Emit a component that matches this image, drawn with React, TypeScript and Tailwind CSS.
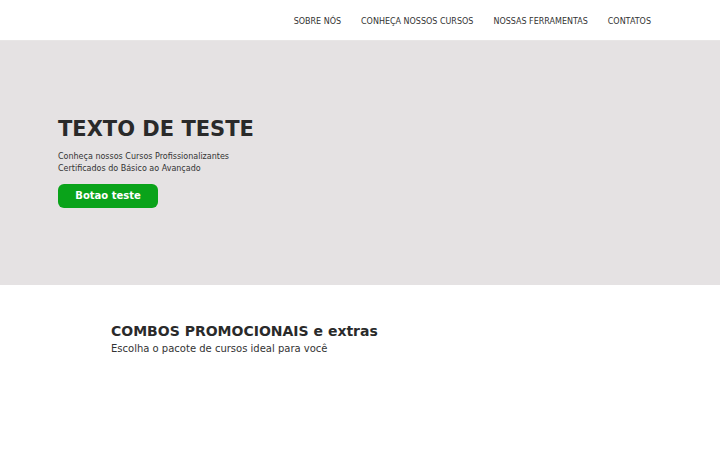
const navItems = ['SOBRE NÓS', 'CONHEÇA NOSSOS CURSOS', 'NOSSAS FERRAMENTAS', 'CONTATOS'];

export default function App() {
  return (
    <div className="min-h-[450px] bg-white text-[#2b2b2b] font-['DejaVu_Sans',sans-serif]">
      <header className="h-[41px] flex items-center justify-end pr-[69px] pt-[3px] border-b border-[#e8e6e6]">
        <nav className="flex gap-[20px] text-[8px] text-[#333]">
          {navItems.map((item) => (
            <a key={item} href="#">
              {item}
            </a>
          ))}
        </nav>
      </header>

      <section className="h-[244px] bg-[#e5e2e3] pl-[58px] pt-[78px]">
        <h1 className="text-[21px] font-bold leading-none text-[#2a2a2a] mb-[11px]">TEXTO DE TESTE</h1>
        <p className="text-[8px] leading-[12px] text-[#333]">
          Conheça nossos Cursos Profissionalizantes
          <br />
          Certificados do Básico ao Avançado
        </p>
        <div className="mt-[7px]">
          <button className="w-[100px] h-[24px] rounded-[6px] bg-[#0aa31a] text-white text-[10px] font-bold">
            Botao teste
          </button>
        </div>
      </section>

      <section className="pl-[111px] pt-[37px]">
        <h2 className="text-[14px] font-bold leading-[19px] text-[#2a2a2a]">COMBOS PROMOCIONAIS e extras</h2>
        <p className="text-[10px] leading-[16px] text-[#333]">Escolha o pacote de cursos ideal para você</p>
      </section>
    </div>
  );
}
